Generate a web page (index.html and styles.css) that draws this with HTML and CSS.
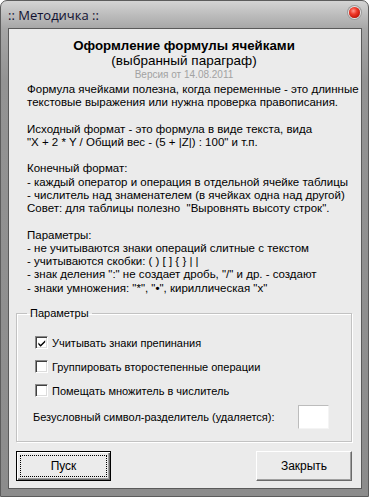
FILE: index.html
```html
<!DOCTYPE html>
<html lang="ru">
<head>
<meta charset="utf-8">
<title>Методичка</title>
<link rel="stylesheet" href="styles.css">
</head>
<body>
<div class="window">
  <div class="titlebar">
    <span class="title">:: Методичка ::</span>
    <span class="close"></span>
  </div>
  <div class="client">
    <div class="header">
      <div class="h1">Оформление формулы ячейками</div>
      <div class="h2">(выбранный параграф)</div>
      <div class="version">Версия от 14.08.2011</div>
    </div>
    <div class="desc">
      <div>Формула ячейками полезна, когда переменные - это длинные</div>
      <div>текстовые выражения или нужна проверка правописания.</div>
      <div class="blank"></div>
      <div>Исходный формат - это формула в виде текста, вида</div>
      <div>"X + 2 * Y / Общий вес - (5 + |Z|) : 100" и т.п.</div>
      <div class="blank"></div>
      <div>Конечный формат:</div>
      <div>- каждый оператор и операция в отдельной ячейке таблицы</div>
      <div>- числитель над знаменателем (в ячейках одна над другой)</div>
      <div>Совет: для таблицы полезно &nbsp;"Выровнять высоту строк".</div>
      <div class="blank"></div>
      <div>Параметры:</div>
      <div>- не учитываются знаки операций слитные с текстом</div>
      <div>- учитываются скобки: ( ) [ ] { } | |</div>
      <div>- знак деления ":" не создает дробь, "/" и др. - создают</div>
      <div>- знаки умножения: "*", "<b class="dot">•</b>", кириллическая "х"</div>
    </div>
    <fieldset class="group">
      <legend>Параметры</legend>
      <label class="check">
        <span class="box"><svg width="11" height="11" viewBox="0 0 11 11"><path d="M1.5 4.5 L4 7 L9 2 L9 4 L4 9 L1.5 6.5 Z" fill="#000"/></svg></span>
        <span>Учитывать знаки препинания</span>
      </label>
      <label class="check">
        <span class="box"></span>
        <span>Группировать второстепенные операции</span>
      </label>
      <label class="check">
        <span class="box"></span>
        <span>Помещать множитель в числитель</span>
      </label>
      <div class="sep-row">
        <span>Безусловный символ-разделитель (удаляется):</span>
        <span class="input"></span>
      </div>
    </fieldset>
    <div class="buttons">
      <div class="btn default"><span class="focus">Пуск</span></div>
      <div class="btn"><span class="plain">Закрыть</span></div>
    </div>
  </div>
</div>
</body>
</html>
```
FILE: styles.css
```css
html, body {
  margin: 0;
  padding: 0;
  background: #ffffff;
}
body {
  width: 369px;
  height: 497px;
  overflow: hidden;
  font-family: "Liberation Sans", Arial, sans-serif;
  font-size: 11px;
  color: #000;
}
.window {
  box-sizing: border-box;
  width: 369px;
  height: 497px;
  border: 1px solid #5c5c5c;
  border-radius: 7px 7px 0 0;
  background: linear-gradient(#d4d4d4 0px, #bcbcbc 14px, #a6a6a6 28px, #939393 80px, #8c8c8c 100%);
  display: flex;
  flex-direction: column;
}
.titlebar {
  height: 27px;
  display: flex;
  align-items: center;
  padding: 0 8px 0 7px;
}
.title {
  font-family: "Open Sans", "Liberation Sans", sans-serif;
  font-size: 13px;
  color: #101030;
  flex: 1;
  margin-top: 2px;
}
.close {
  width: 11px;
  height: 11px;
  border-radius: 50%;
  background: radial-gradient(circle at 40% 35%, #ff9a90 0, #f03a2a 35%, #c8180c 70%, #8c0c04 100%);
  box-shadow: 0 0 0 1px #e4e4e4, 0 0 0 2px #9a9a9a;
  margin-top: -3px;
}
.client {
  flex: 1;
  margin: 0 6px 7px 7px;
  border: 1px solid #5a5a5a;
  background: #ebebeb;
  display: flex;
  flex-direction: column;
  padding: 9px 9px 7px 7px;
}
.header {
  text-align: center;
}
.h1 {
  font-weight: bold;
  font-size: 13.3px;
  line-height: 15px;
}
.h2 {
  font-size: 13.5px;
  line-height: 15px;
}
.version {
  font-size: 10px;
  line-height: 13px;
  color: #a2a2a2;
}
.desc {
  margin-left: 11px;
  font-size: 11.5px;
  line-height: 13.27px;
  margin-top: 2px;
  white-space: nowrap;
}
.blank {
  height: 13.27px;
}
.dot {
  font-weight: bold;
}
.group {
  margin: 12px 0 0 0;
  padding: 0 0 12px 0;
  border: 1px solid #c2c2c2;
  box-shadow: inset 1px 1px 0 #ffffff, 1px 1px 0 #ffffff;
}
.group legend {
  margin-left: 10px;
  padding: 0 3px;
  line-height: 13px;
}
.check {
  display: flex;
  align-items: center;
  gap: 4px;
  margin: 11px 0 0 18px;
  height: 13px;
}
.check:first-of-type {
  margin-top: 16px;
}
.box {
  box-sizing: border-box;
  width: 13px;
  height: 13px;
  background: #fff;
  border: 1px solid;
  border-color: #8a8a8a #ffffff #ffffff #8a8a8a;
  box-shadow: inset 1px 1px 0 #404040, inset -1px -1px 0 #dcdcdc;
  display: flex;
  align-items: center;
  justify-content: center;
}
.box svg {
  display: block;
  margin: 1px 0 0 1px;
}
.sep-row {
  display: flex;
  align-items: center;
  margin: 8px 22px 0 16px;
}
.sep-row span:first-child {
  flex: 1;
}
.input {
  box-sizing: border-box;
  width: 31px;
  height: 24px;
  background: #fff;
  border: 1px solid;
  border-color: #bcbcbc #f4f4f4 #f4f4f4 #bcbcbc;
}
.buttons {
  display: flex;
  justify-content: space-between;
  margin-top: 9px;
}
.btn {
  box-sizing: border-box;
  width: 96px;
  height: 30px;
  background: #ebebeb;
  border: 1px solid;
  border-color: #ffffff #6a6a6a #6a6a6a #ffffff;
  box-shadow: inset -1px -1px 0 #a0a0a0;
  display: flex;
  font-size: 12px;
}
.btn.default {
  width: 95px;
  border: 1px solid #000;
  box-shadow: inset 1px 1px 0 #ffffff, inset -1px -1px 0 #6a6a6a, inset -2px -2px 0 #a0a0a0;
}
.focus, .plain {
  flex: 1;
  display: flex;
  align-items: center;
  justify-content: center;
}
.focus {
  margin: 3px;
  border: 1px dotted #000;
}
```
